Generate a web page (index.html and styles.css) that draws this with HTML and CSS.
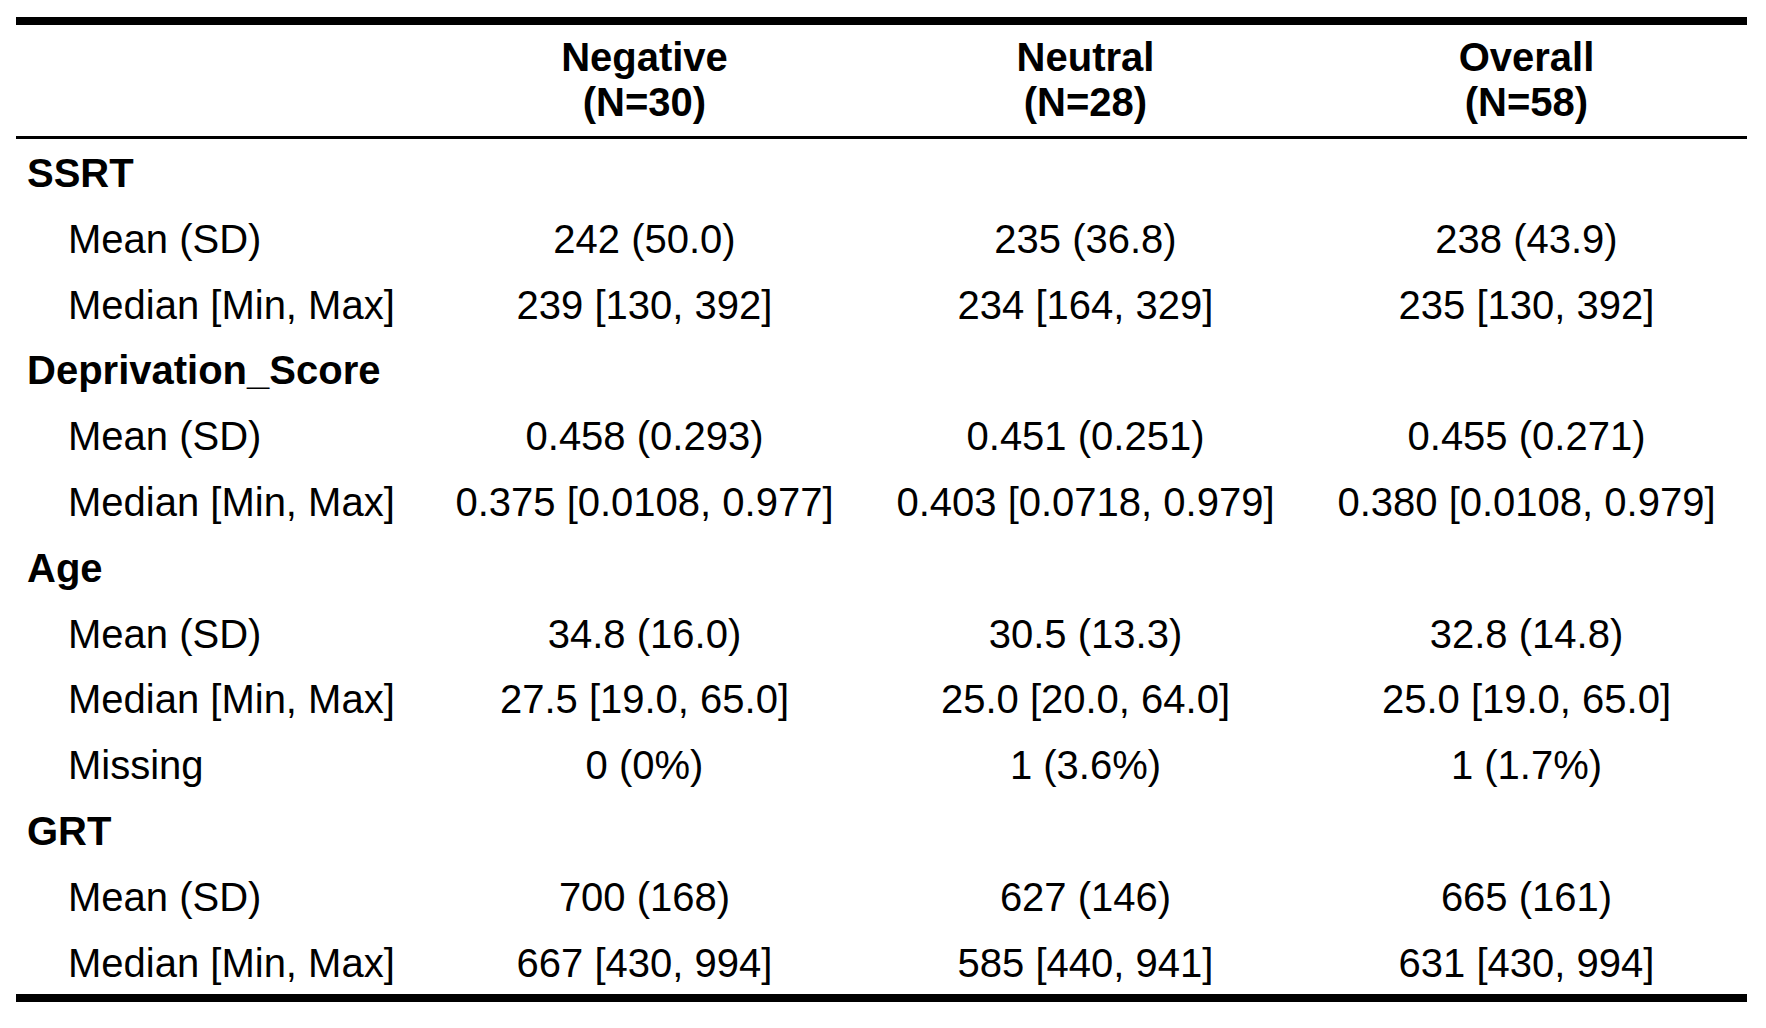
FILE: index.html
```html
<!DOCTYPE html>
<html>
<head>
<meta charset="utf-8">
<link rel="stylesheet" href="styles.css">
</head>
<body>
<table class="t1">
  <colgroup>
    <col class="c-label">
    <col class="c-data">
    <col class="c-data">
    <col class="c-data">
  </colgroup>
  <thead>
    <tr>
      <th class="rowlabel"></th>
      <th>Negative<br>(N=30)</th>
      <th>Neutral<br>(N=28)</th>
      <th>Overall<br>(N=58)</th>
    </tr>
  </thead>
  <tbody>
    <tr><td class="rowlabel first">SSRT</td><td></td><td></td><td></td></tr>
    <tr><td class="rowlabel">Mean (SD)</td><td>242 (50.0)</td><td>235 (36.8)</td><td>238 (43.9)</td></tr>
    <tr><td class="rowlabel">Median [Min, Max]</td><td>239 [130, 392]</td><td>234 [164, 329]</td><td>235 [130, 392]</td></tr>
    <tr><td class="rowlabel first">Deprivation_Score</td><td></td><td></td><td></td></tr>
    <tr><td class="rowlabel">Mean (SD)</td><td>0.458 (0.293)</td><td>0.451 (0.251)</td><td>0.455 (0.271)</td></tr>
    <tr><td class="rowlabel">Median [Min, Max]</td><td>0.375 [0.0108, 0.977]</td><td>0.403 [0.0718, 0.979]</td><td>0.380 [0.0108, 0.979]</td></tr>
    <tr><td class="rowlabel first">Age</td><td></td><td></td><td></td></tr>
    <tr><td class="rowlabel">Mean (SD)</td><td>34.8 (16.0)</td><td>30.5 (13.3)</td><td>32.8 (14.8)</td></tr>
    <tr><td class="rowlabel">Median [Min, Max]</td><td>27.5 [19.0, 65.0]</td><td>25.0 [20.0, 64.0]</td><td>25.0 [19.0, 65.0]</td></tr>
    <tr><td class="rowlabel">Missing</td><td>0 (0%)</td><td>1 (3.6%)</td><td>1 (1.7%)</td></tr>
    <tr><td class="rowlabel first">GRT</td><td></td><td></td><td></td></tr>
    <tr><td class="rowlabel">Mean (SD)</td><td>700 (168)</td><td>627 (146)</td><td>665 (161)</td></tr>
    <tr class="last"><td class="rowlabel">Median [Min, Max]</td><td>667 [430, 994]</td><td>585 [440, 941]</td><td>631 [430, 994]</td></tr>
  </tbody>
</table>
</body>
</html>
```

FILE: styles.css
```css
html, body {
  margin: 0;
  padding: 0;
  background: #ffffff;
}

body {
  padding: 17px 16px 0 16px;
  font-family: "Liberation Sans", Arial, Helvetica, sans-serif;
  color: #000000;
}

.t1 {
  width: 1731px;
  table-layout: fixed;
  border-collapse: separate;
  border-spacing: 0;
  font-size: 40px;
  line-height: 45.8px;
}

.c-label {
  width: 408px;
}

.c-data {
  width: 441px;
}

.t1 th,
.t1 td {
  margin: 0;
  text-align: center;
  white-space: nowrap;
}

.t1 thead th {
  font-weight: bold;
  border-top: 8px solid #000000;
  border-bottom: 3px solid #000000;
  padding: 9.7px 0;
}

.t1 td {
  height: 45.8px;
  padding: 12px 0 8px 0;
}

.t1 .rowlabel {
  text-align: left;
  padding-left: 52px;
}

.t1 .rowlabel.first {
  padding-left: 11px;
  font-weight: bold;
}

.t1 .last td {
  border-bottom: 8px solid #000000;
}
```
